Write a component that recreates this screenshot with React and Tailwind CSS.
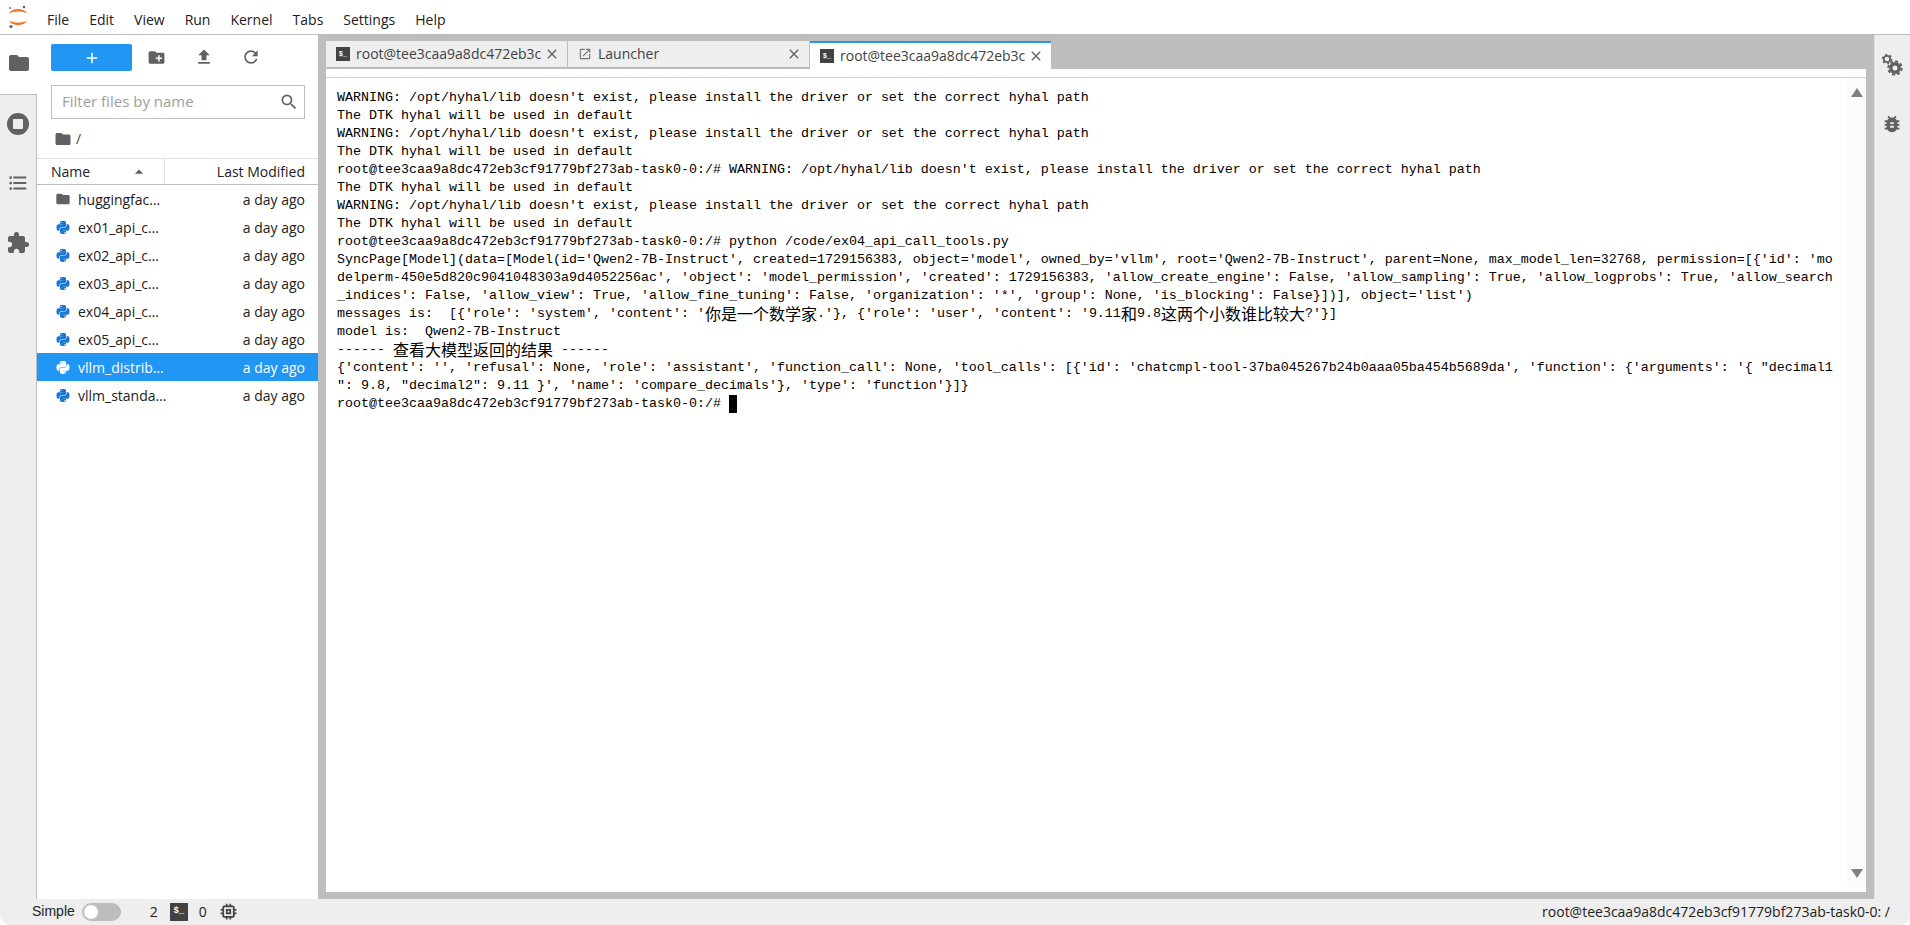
import React from "react";
import {
  MdFolder, MdCreateNewFolder, MdFileUpload, MdRefresh, MdSearch, MdClose,
  MdExtension, MdBugReport, MdMemory, MdFormatListBulleted, MdOutlineOpenInNew, MdAdd, MdArrowDropUp,
} from "react-icons/md";
import { FaPython } from "react-icons/fa";

const UI = { fontFamily: '"Open Sans", "Noto Sans", sans-serif' };
const prompt = "root@tee3caa9a8dc472eb3cf91779bf273ab-task0-0:/#";
const warn = "WARNING: /opt/hyhal/lib doesn't exist, please install the driver or set the correct hyhal path";
const dtk = "The DTK hyhal will be used in default";
const lines = [
  warn, dtk, warn, dtk, `${prompt} ${warn}`, dtk, warn, dtk,
  `${prompt} python /code/ex04_api_call_tools.py`,
  "SyncPage[Model](data=[Model(id='Qwen2-7B-Instruct', created=1729156383, object='model', owned_by='vllm', root='Qwen2-7B-Instruct', parent=None, max_model_len=32768, permission=[{'id': 'mo",
  "delperm-450e5d820c9041048303a9d4052256ac', 'object': 'model_permission', 'created': 1729156383, 'allow_create_engine': False, 'allow_sampling': True, 'allow_logprobs': True, 'allow_search",
  "_indices': False, 'allow_view': True, 'allow_fine_tuning': False, 'organization': '*', 'group': None, 'is_blocking': False}])], object='list')",
  "messages is:  [{'role': 'system', 'content': '你是一个数学家.'}, {'role': 'user', 'content': '9.11和9.8这两个小数谁比较大?'}]",
  "model is:  Qwen2-7B-Instruct",
  "------ 查看大模型返回的结果 ------",
  "{'content': '', 'refusal': None, 'role': 'assistant', 'function_call': None, 'tool_calls': [{'id': 'chatcmpl-tool-37ba045267b24b0aaa05ba454b5689da', 'function': {'arguments': '{ \"decimal1",
  "\": 9.8, \"decimal2\": 9.11 }', 'name': 'compare_decimals'}, 'type': 'function'}]}",
];

function TermLine({ text }) {
  const parts = text.split(/([\u4e00-\u9fff]+)/);
  return (
    <div className="h-[18px] leading-[18px] whitespace-pre">
      {parts.map((p, i) =>
        i % 2 ? (
          <span key={i} className="text-[16px] leading-[16px] align-top font-['Noto_Sans_CJK_SC']">{p}</span>
        ) : (
          <span key={i}>{p}</span>
        )
      )}
    </div>
  );
}

function Logo() {
  return (
    <svg width="24" height="26" viewBox="0 0 24 26" className="shrink-0">
      <path d="M3 9.5 C5.5 3.5 18.5 3.5 21 9.5 C17.5 6.8 6.5 6.8 3 9.5Z" fill="#f37726" />
      <path d="M3 16.5 C5.5 22.5 18.5 22.5 21 16.5 C17.5 19.2 6.5 19.2 3 16.5Z" fill="#f37726" />
      <circle cx="18" cy="3" r="1.3" fill="#616161" />
      <circle cx="4" cy="4" r="1" fill="#757575" />
      <circle cx="5" cy="22.5" r="1.6" fill="#616161" />
    </svg>
  );
}

function Gears() {
  return (
    <svg width="26" height="26" viewBox="0 0 26 26" className="shrink-0">
      <circle cx="7" cy="7" r="3.2" fill="none" stroke="#616161" strokeWidth="1.8" />
      <circle cx="7" cy="7" r="4.6" fill="none" stroke="#616161" strokeWidth="1.4" strokeDasharray="2 2.8" />
      <circle cx="15" cy="16" r="4.2" fill="none" stroke="#616161" strokeWidth="3.4" />
      <circle cx="15" cy="16" r="6.7" fill="none" stroke="#616161" strokeWidth="2" strokeDasharray="3 2.26" />
    </svg>
  );
}

function TermIcon({ size = "w-[14px] h-[14px]", text = "text-[7px]" }) {
  return (
    <div className={`${size} ${text} shrink-0 bg-[#424242] text-white font-bold flex items-center justify-center leading-none font-['Liberation_Mono']`}>
      $_
    </div>
  );
}

function Tab({ label, icon, active }) {
  return (
    <div
      className={`w-[241px] flex items-center pl-[10px] pr-[7px] text-[14px] text-[#424242] ${
        active
          ? "h-[28px] bg-white border-t-[2px] border-[#2196f3]"
          : "h-[27px] bg-[#eeeeee] border-b border-[#bdbdbd]"
      }`}
    >
      {icon}
      <span className="ml-[6px] mb-[2px] flex-1 whitespace-nowrap overflow-hidden">{label}</span>
      <MdClose className="text-[16px] text-[#616161] shrink-0" />
    </div>
  );
}

const files = [
  ["huggingfac…", "dir"], ["ex01_api_c…"], ["ex02_api_c…"], ["ex03_api_c…"], ["ex04_api_c…"], ["ex05_api_c…"],
  ["vllm_distrib…", "py", true], ["vllm_standa…"],
];

function FileRow({ name, kind, selected }) {
  return (
    <div className={`h-[28px] flex items-center pl-[18px] pr-[13px] text-[14px] ${selected ? "bg-[#2196f3] text-white" : "text-[#212121]"}`}>
      {kind === "dir" ? (
        <MdFolder className="text-[18px] text-[#616161] w-[16px] shrink-0" />
      ) : (
        <FaPython className={`text-[15px] w-[16px] shrink-0 ${selected ? "text-white" : "text-[#1976d2]"}`} />
      )}
      <span className="ml-[7px] flex-1 whitespace-nowrap">{name}</span>
      <span className="whitespace-nowrap">a day ago</span>
    </div>
  );
}

export default function App() {
  return (
    <div className="h-[925px] w-[1910px] flex flex-col overflow-hidden rounded-[10px] bg-white text-[#212121]" style={UI}>
      {/* Menu bar */}
      <div className="h-[35px] shrink-0 flex items-center pl-[6px] bg-white border-b border-[#bdbdbd]">
        <Logo />
        <div className="flex ml-[17px] mt-[4px] text-[14px] text-[#212121] gap-[20px]">
          {["File", "Edit", "View", "Run", "Kernel", "Tabs", "Settings", "Help"].map((m) => (
            <span key={m}>{m}</span>
          ))}
        </div>
      </div>

      {/* Body */}
      <div className="flex-1 flex min-h-0">
        {/* Left side bar */}
        <div className="w-[37px] shrink-0 bg-[#eeeeee] border-r border-[#bdbdbd] flex flex-col">
          <div className="h-[59px] w-[37px] bg-white -mr-px flex items-center justify-center pb-[3px]">
            <MdFolder className="text-[24px] text-[#616161]" />
          </div>
          <div className="h-[60px] flex items-center justify-center border-t border-[#bdbdbd] pb-[2px]">
            <div className="w-[22px] h-[22px] rounded-full bg-[#616161] flex items-center justify-center">
              <div className="w-[10px] h-[10px] bg-[#eeeeee] rounded-[1px]" />
            </div>
          </div>
          <div className="h-[60px] flex items-center justify-center pb-[2px]">
            <MdFormatListBulleted className="text-[22px] text-[#616161]" />
          </div>
          <div className="h-[60px] flex items-center justify-center pb-[2px]">
            <MdExtension className="text-[24px] text-[#616161]" />
          </div>
        </div>

        {/* File browser */}
        <div className="w-[281px] shrink-0 bg-white flex flex-col">
          <div className="h-[37px] pt-[9px] pl-[14px] flex items-start shrink-0">
            <div className="w-[81px] h-[27px] rounded-[2px] bg-[#2196f3] flex items-center justify-center">
              <MdAdd className="text-[18px] text-white" />
            </div>
            <MdCreateNewFolder className="text-[19px] text-[#616161] ml-[15px] mt-[4px]" />
            <MdFileUpload className="text-[20px] text-[#616161] ml-[28px] mt-[3px]" />
            <MdRefresh className="text-[20px] text-[#616161] ml-[27px] mt-[3px]" />
          </div>
          <div className="mt-[13px] ml-[14px] w-[254px] h-[34px] shrink-0 border border-[#bdbdbd] flex items-center pl-[10px] pr-[5px]">
            <span className="flex-1 text-[15px] text-[#9e9e9e] whitespace-nowrap mb-[2px]">Filter files by name</span>
            <MdSearch className="text-[20px] text-[#616161]" />
          </div>
          <div className="h-[39px] shrink-0 flex items-center pl-[17px] text-[14px] text-[#424242]">
            <MdFolder className="text-[18px] text-[#616161]" />
            <span className="ml-[4px]">/</span>
          </div>
          <div className="h-[27px] shrink-0 flex items-stretch border-y border-[#e0e0e0] border-b-[#bdbdbd] text-[14px] font-medium text-[#212121]">
            <div className="w-[128px] flex items-center pl-[14px] border-r border-[#e0e0e0] relative">
              Name
              <MdArrowDropUp className="text-[20px] text-[#616161] absolute left-[92px] top-[3px]" />
            </div>
            <div className="flex-1 flex items-center justify-end pr-[13px] whitespace-nowrap">Last Modified</div>
          </div>
          <div className="flex-1">
            {files.map(([n, k, s]) => (
              <FileRow key={n} name={n} kind={k} selected={s} />
            ))}
          </div>
        </div>

        {/* Main area */}
        <div className="flex-1 min-w-0 bg-[#bdbdbd] pl-[8px] pr-[8px] pt-[6px] pb-[7px] flex flex-col">
          <div className="flex h-[28px] shrink-0 gap-px items-start">
            <Tab label="root@tee3caa9a8dc472eb3c" icon={<TermIcon />} />
            <Tab label="Launcher" icon={<MdOutlineOpenInNew className="text-[14px] text-[#757575] shrink-0" />} />
            <Tab label="root@tee3caa9a8dc472eb3c" icon={<TermIcon />} active />
          </div>
          <div className="h-[9px] shrink-0 bg-white border-b border-[#d0d0d0]" />
          <div className="flex-1 min-h-0 bg-white flex">
            <div className="flex-1 min-w-0 pl-[11px] pt-[11px] text-[13.33px] text-black font-['Liberation_Mono']">
              {lines.map((l, i) => (
                <TermLine key={i} text={l} />
              ))}
              <div className="h-[18px] leading-[18px] whitespace-pre flex items-center">
                <span>{prompt} </span>
                <span className="w-[8px] h-[18px] bg-black inline-block" />
              </div>
            </div>
            <div className="w-[19px] shrink-0 bg-[#fbfbfb] mb-[5px] flex flex-col items-center justify-between pt-[10px] pb-[9px]">
              <div className="w-0 h-0 border-x-[6px] border-x-transparent border-b-[9px] border-b-[#808080]" />
              <div className="w-0 h-0 border-x-[6px] border-x-transparent border-t-[9px] border-t-[#808080]" />
            </div>
          </div>
        </div>

        {/* Right side bar */}
        <div className="w-[36px] shrink-0 bg-[#eeeeee] border-l border-[#e0e0e0] flex flex-col items-center">
          <div className="h-[59px] flex items-center justify-center">
            <Gears />
          </div>
          <div className="h-[60px] flex items-center justify-center">
            <MdBugReport className="text-[22px] text-[#616161] mr-[1px]" />
          </div>
        </div>
      </div>

      {/* Status bar */}
      <div className="h-[26px] shrink-0 bg-[#eeeeee] flex items-center pl-[32px] pr-[20px] pb-[1px] text-[14px] text-[#212121]">
        <span className="font-['Liberation_Sans'] text-[14px]">Simple</span>
        <div className="ml-[7px] w-[39px] h-[18px] rounded-full bg-[#bdbdbd] flex items-center pl-[2px]">
          <div className="w-[14px] h-[14px] rounded-full bg-white" />
        </div>
        <span className="ml-[29px]">2</span>
        <div className="ml-[12px]"><TermIcon size="w-[18px] h-[18px]" text="text-[9px]" /></div>
        <span className="ml-[11px]">0</span>
        <MdMemory className="ml-[11px] text-[21px] text-[#424242]" />
        <span className="ml-auto whitespace-nowrap">root@tee3caa9a8dc472eb3cf91779bf273ab-task0-0: /</span>
      </div>
    </div>
  );
}
